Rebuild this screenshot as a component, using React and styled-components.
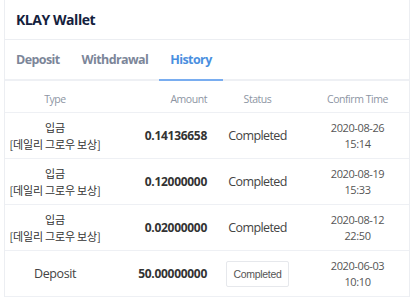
import styled, { createGlobalStyle } from "styled-components";

const Global = createGlobalStyle`
  body {
    margin: 0;
    background: #ffffff;
    font-family: "Open Sans", "Noto Sans CJK KR", sans-serif;
  }
`;

const Page = styled.div`
  padding-left: 4px;
  padding-right: 1px;
`;

const Card = styled.div`
  border-left: 1px solid #eceef2;
  border-right: 1px solid #eceef2;
  background: #fff;
`;

const Header = styled.div`
  height: 40px;
  display: flex;
  align-items: center;
  padding-left: 11px;
  border-bottom: 1px solid #eceef2;
  box-sizing: border-box;
`;

const Title = styled.h2`
  margin: 0;
  font-size: 14px;
  letter-spacing: -0.45px;
  font-weight: 700;
  color: #14213d;
`;

const Tabs = styled.div`
  height: 41px;
  display: flex;
  align-items: stretch;
  border-bottom: 2px solid #eef0f4;
  box-sizing: border-box;
`;

const Tab = styled.div`
  display: flex;
  align-items: center;
  padding: 0 11px;
  font-size: 12.5px;
  letter-spacing: -0.6px;
  font-weight: 700;
  color: ${p => (p.$active ? "#4a8fe0" : "#7c8699")};
  border-bottom: 2px solid ${p => (p.$active ? "#79adf0" : "transparent")};
  margin-bottom: -2px;
`;

const Table = styled.div`
  display: flex;
  flex-direction: column;
`;

const Row = styled.div`
  display: grid;
  grid-template-columns: 100px 112px 81px 1fr;
  align-items: center;
  height: ${p => (p.$head ? "32px" : "46px")};
  border-bottom: 1px solid #eef0f4;
  box-sizing: border-box;
  padding-top: ${p => (p.$head ? "4px" : "0")};
`;

const HeadCell = styled.div`
  font-size: 10.5px;
  letter-spacing: -0.45px;
  font-weight: 400;
  color: #8d95a3;
  text-align: ${p => p.$align || "center"};
  padding-right: ${p => (p.$align === "right" ? "10px" : "0")};
  padding-left: ${p => (p.$shift ? "8px" : "0")};
`;

const TypeCell = styled.div`
  text-align: center;
  font-family: "Noto Sans CJK KR", "Open Sans", sans-serif;
  font-size: 11px;
  letter-spacing: -0.2px;
  line-height: 17px;
  white-space: nowrap;
  color: #333;
`;

const Deposit = styled.div`
  font-family: "Open Sans", sans-serif;
  font-size: 12.5px;
  letter-spacing: -0.4px;
  color: #444;
`;

const Amount = styled.div`
  text-align: right;
  padding-right: 10px;
  font-size: 12px;
  letter-spacing: -0.3px;
  font-weight: 700;
  color: #333;
`;

const Status = styled.div`
  text-align: center;
  font-size: 12.5px;
  letter-spacing: -0.6px;
  color: #444;
`;

const StatusBox = styled.span`
  display: inline-flex;
  align-items: center;
  justify-content: center;
  width: 63px;
  height: 26px;
  box-sizing: border-box;
  border: 1px solid #e6e8ec;
  border-radius: 2px;
  font-family: "Liberation Sans", Arial, sans-serif;
  font-size: 10.5px;
  letter-spacing: -0.3px;
  color: #555;
`;

const Time = styled.div`
  text-align: center;
  padding-left: 8px;
  font-size: 11px;
  letter-spacing: -0.4px;
  line-height: 16px;
  color: #555;
`;

const rows = [
  { type: ["입금", "[데일리 그로우 보상]"], amount: "0.14136658", date: "2020-08-26", time: "15:14" },
  { type: ["입금", "[데일리 그로우 보상]"], amount: "0.12000000", date: "2020-08-19", time: "15:33" },
  { type: ["입금", "[데일리 그로우 보상]"], amount: "0.02000000", date: "2020-08-12", time: "22:50" },
  { deposit: true, amount: "50.00000000", date: "2020-06-03", time: "10:10" },
];

export default function App() {
  return (
    <Page>
      <Global />
      <Card>
        <Header>
          <Title>KLAY Wallet</Title>
        </Header>
        <Tabs>
          <Tab>Deposit</Tab>
          <Tab>Withdrawal</Tab>
          <Tab $active>History</Tab>
        </Tabs>
        <Table>
          <Row $head>
            <HeadCell>Type</HeadCell>
            <HeadCell $align="right">Amount</HeadCell>
            <HeadCell>Status</HeadCell>
            <HeadCell $shift>Confirm Time</HeadCell>
          </Row>
          {rows.map((r, i) => (
            <Row key={i}>
              <TypeCell>
                {r.deposit ? (
                  <Deposit>Deposit</Deposit>
                ) : (
                  r.type.map((t, j) => <div key={j}>{t}</div>)
                )}
              </TypeCell>
              <Amount>{r.amount}</Amount>
              <Status>{r.deposit ? <StatusBox>Completed</StatusBox> : "Completed"}</Status>
              <Time>
                <div>{r.date}</div>
                <div>{r.time}</div>
              </Time>
            </Row>
          ))}
        </Table>
      </Card>
    </Page>
  );
}
